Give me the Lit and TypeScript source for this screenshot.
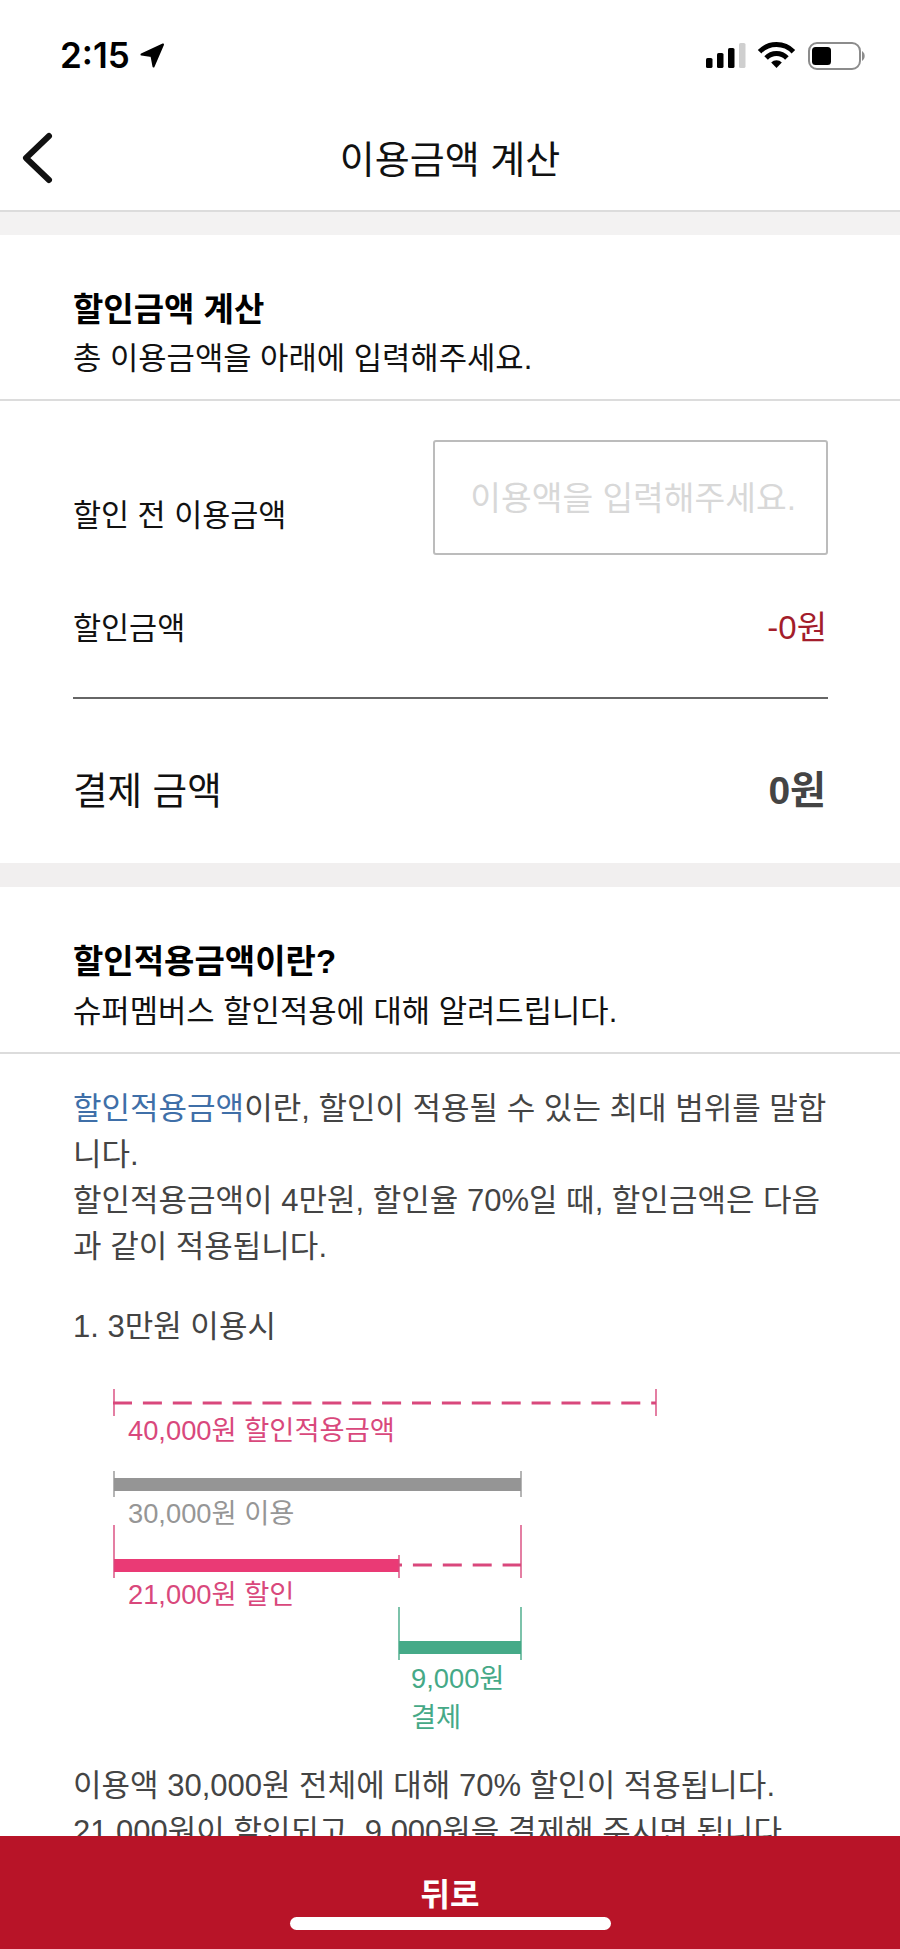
import { LitElement, html, css, svg } from "lit";
import { customElement } from "lit/decorators.js";

const PINK = "#d9487c";
const GRAY = "#969696";
const GREEN = "#45a987";

const ticks: [number, number, number, string][] = [
  [114, 1389, 1416, PINK], [656, 1389, 1416, PINK],
  [114, 1471, 1497, GRAY], [521, 1471, 1497, GRAY],
  [114, 1525, 1578, PINK], [521, 1525, 1578, PINK], [399, 1555, 1578, PINK],
  [399, 1607, 1660, GREEN], [521, 1607, 1660, GREEN],
];
const bars: [number, number, number, string][] = [
  [114, 407, 1478, "#959595"],
  [114, 285, 1559, "#ea3a75"],
  [399, 122, 1641, "#45aa88"],
];
const labels: [number, number, string, string][] = [
  [128, 1440, "40,000원 할인적용금액", PINK],
  [128, 1523, "30,000원 이용", GRAY],
  [128, 1604, "21,000원 할인", PINK],
  [411, 1688, "9,000원", GREEN],
  [411, 1727, "결제", GREEN],
];

@customElement("app-root")
export class AppRoot extends LitElement {
  static styles = css`
    :host {
      display: block;
      position: relative;
      width: 900px;
      height: 1949px;
      overflow: hidden;
      background: #fff;
      color: #111;
      font-family: "Liberation Sans", "Noto Sans CJK KR", sans-serif;
    }
    .status {
      height: 110px;
      box-sizing: border-box;
      padding: 42px 34px 0 60px;
      display: flex;
      justify-content: space-between;
      align-items: flex-start;
    }
    .time-wrap { display: flex; align-items: center; gap: 10px; height: 27px; }
    .time {
      font-family: Inter, "Liberation Sans", sans-serif;
      font-weight: 600;
      font-size: 35px;
      line-height: 27px;
      color: #000;
    }
    .sys { display: block; }
    .nav {
      height: 100px;
      position: relative;
      display: flex;
      align-items: center;
      justify-content: center;
      border-bottom: 2px solid #dcdcdc;
    }
    .nav svg { position: absolute; left: 20px; top: 20px; }
    .title { font-size: 38px; line-height: 50px; font-weight: 400; color: #111; }
    .band { height: 23px; background: #f3f2f2; }
    .band.second { height: 24px; background: #f1efef; }
    .head { padding: 55px 73px 18px; border-bottom: 2px solid #dcdcdc; }
    .head h2 { margin: 0; font-size: 33px; line-height: 40px; font-weight: 700; color: #000; }
    .head p { margin: 7px 0 0; font-size: 30.8px; line-height: 44px; color: #111; }
    .head.second p { margin-top: 8px; }
    .calc { padding: 39px 72px 47px 73px; }
    .row { display: flex; justify-content: space-between; align-items: center; }
    .row-input .lab { margin-top: 35px; }
    .lab { font-size: 30.5px; line-height: 46px; color: #111; }
    .box {
      width: 395px;
      height: 115px;
      box-sizing: border-box;
      border: 2px solid #bcbcbc;
      border-radius: 3px;
      display: flex;
      align-items: center;
      justify-content: flex-end;
      padding: 0 30px 4px 0;
      font-size: 33.4px;
      color: #d8d8d8;
    }
    .row-off { margin-top: 50px; }
    .off { font-size: 33px; line-height: 46px; color: #a31d2b; padding-right: 1px; }
    .rule { height: 2px; background: #666; margin-top: 46px; }
    .row-total { margin-top: 67px; }
    .total-lab { font-size: 37.6px; line-height: 50px; color: #111; }
    .total-val { font-size: 39px; line-height: 50px; font-weight: 700; color: #444; padding-right: 2px; }
    .body { padding: 32px 73px 0; color: #444; font-size: 31px; line-height: 46px; }
    .body p { margin: 0; }
    .link { color: #3f6fa8; }
    .step { margin-top: 34px !important; }
    .diagram { display: block; width: 754px; height: 413px; }
    .diagram text { font-size: 27.3px; font-family: "Liberation Sans", "Noto Sans CJK KR", sans-serif; }
    .foot {
      position: absolute;
      left: 0;
      right: 0;
      bottom: 0;
      height: 113px;
      background: #b81428;
      display: flex;
      justify-content: center;
    }
    .foot span { color: #fff; font-size: 32px; line-height: 46px; font-weight: 700; margin-top: 36px; }
    .home {
      position: absolute;
      left: 290px;
      top: 81px;
      width: 321px;
      height: 13px;
      background: #fff;
      border-radius: 7px;
    }
  `;

  private diagram() {
    return html`<svg class="diagram" viewBox="73 1350 754 413">
      ${svg`<line x1="113" x2="656" y1="1403" y2="1403" stroke=${PINK} stroke-width="3" stroke-dasharray="19 10.9"></line>`}
      ${svg`<line x1="399" x2="521" y1="1565" y2="1565" stroke=${PINK} stroke-width="3" stroke-dasharray="19 10.9" stroke-dashoffset="16"></line>`}
      ${bars.map(([x, w, y, c]) => svg`<rect x=${x} y=${y} width=${w} height="13" fill=${c}></rect>`)}
      ${ticks.map(([x, a, b, c]) => svg`<line x1=${x} x2=${x} y1=${a} y2=${b} stroke=${c} stroke-width="1.4"></line>`)}
      ${labels.map(([x, y, t, c]) => svg`<text x=${x} y=${y} fill=${c}>${t}</text>`)}
    </svg>`;
  }

  render() {
    return html`
      <div class="status">
        <div class="time-wrap">
          <span class="time">2:15</span>
          <svg class="sys" width="26" height="26" viewBox="0 0 26 26">
            <path d="M23 1.5 L1.5 11.5 L11.5 13 L13.5 23.5 Z" fill="#000" stroke="#000" stroke-width="2" stroke-linejoin="round"></path>
          </svg>
        </div>
        <svg class="sys" width="160" height="28" viewBox="0 0 160 28">
          <rect x="0" y="16" width="6.5" height="10" rx="1.6" fill="#000"></rect>
          <rect x="11" y="11" width="6.5" height="15" rx="1.6" fill="#000"></rect>
          <rect x="22" y="6" width="6.5" height="20" rx="1.6" fill="#000"></rect>
          <rect x="33" y="1" width="6.5" height="25" rx="1.6" fill="#cfcfcf"></rect>
          <g transform="translate(53 0)" fill="none" stroke="#000" stroke-width="5">
            <path d="M.6 9.7 A23.5 23.5 0 0 1 34.4 9.7"></path>
            <path d="M7.1 15.9 A14.5 14.5 0 0 1 27.9 15.9"></path>
            <path d="M17.5 26 L12.2 20.5 A7.5 7.5 0 0 1 22.8 20.5 Z" fill="#000" stroke="none"></path>
          </g>
          <rect x="103" y="1" width="51" height="26" rx="8" fill="none" stroke="#8c8c8c" stroke-width="2"></rect>
          <rect x="106" y="5" width="19" height="18" rx="3.5" fill="#000"></rect>
          <path d="M156 9 a6 6 0 0 1 0 10 Z" fill="#8c8c8c"></path>
        </svg>
      </div>
      <div class="nav">
        <svg width="36" height="56" viewBox="0 0 36 56">
          <path d="M29 16 L6 38 L29 60" transform="translate(0 -10)" fill="none" stroke="#111" stroke-width="6" stroke-linecap="round" stroke-linejoin="round"></path>
        </svg>
        <span class="title">이용금액 계산</span>
      </div>
      <div class="band"></div>
      <div class="head">
        <h2>할인금액 계산</h2>
        <p>총 이용금액을 아래에 입력해주세요.</p>
      </div>
      <div class="calc">
        <div class="row row-input">
          <span class="lab">할인 전 이용금액</span>
          <div class="box">이용액을 입력해주세요.</div>
        </div>
        <div class="row row-off">
          <span class="lab">할인금액</span>
          <span class="off">-0원</span>
        </div>
        <div class="rule"></div>
        <div class="row row-total">
          <span class="total-lab">결제 금액</span>
          <span class="total-val">0원</span>
        </div>
      </div>
      <div class="band second"></div>
      <div class="head second">
        <h2>할인적용금액이란?</h2>
        <p>슈퍼멤버스 할인적용에 대해 알려드립니다.</p>
      </div>
      <div class="body">
        <p><span class="link">할인적용금액</span>이란, 할인이 적용될 수 있는 최대 범위를 말합<br />니다.<br />할인적용금액이 4만원, 할인율 70%일 때, 할인금액은 다음<br />과 같이 적용됩니다.</p>
        <p class="step">1. 3만원 이용시</p>
        ${this.diagram()}
        <p>이용액 30,000원 전체에 대해 70% 할인이 적용됩니다.<br />21,000원이 할인되고, 9,000원을 결제해 주시면 됩니다.</p>
      </div>
      <div class="foot">
        <span>뒤로</span>
        <div class="home"></div>
      </div>
    `;
  }
}
